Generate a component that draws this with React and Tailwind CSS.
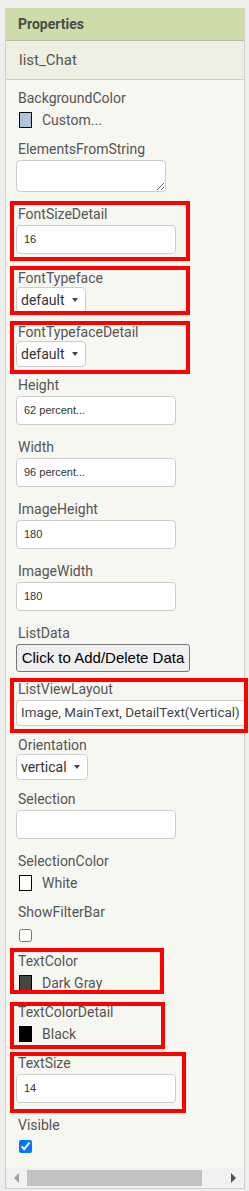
import React from 'react';

const roboto = "font-['Roboto',sans-serif]";

const Label = ({ children, tight }) => (
  <div className={`whitespace-nowrap pl-[2px] text-[14px] leading-[16px] text-[#555] ${tight ? 'h-[17px]' : 'h-[19px]'}`}>
    {children}
  </div>
);

const Highlight = ({ box, children }) => (
  <div className="relative">
    {children}
    <div className={`pointer-events-none absolute border-4 border-[#ff0000] ${box}`} />
  </div>
);

const TextProp = ({ label, value = '', gap = 'mb-[14px]' }) => (
  <div className={gap}>
    <Label>{label}</Label>
    <div className="flex h-[29px] w-[160px] items-center rounded-[4px] border border-[#ccc] bg-white pl-[7px] font-['Liberation_Sans',Arial,sans-serif] text-[11px] text-[#333]">
      {value}
    </div>
  </div>
);

const SelectProp = ({ label, value, gap = 'mb-[11px]' }) => (
  <div className={gap}>
    <Label tight>{label}</Label>
    <div className="flex h-[26px] w-fit items-center rounded-[4px] border border-[#ccc] bg-white pl-[4px] pr-[7px] text-[14px] text-[#333]">
      {value}
      <span className="ml-[7px] h-0 w-0 border-x-[3px] border-t-[4px] border-x-transparent border-t-[#444]" />
    </div>
  </div>
);

const ColorProp = ({ label, swatch, name }) => (
  <div className="mb-[13px]">
    <Label>{label}</Label>
    <div className="mt-[3px] flex h-[16px] items-center pl-[3px]">
      <div className={`h-[16px] w-[13px] border border-black ${swatch}`} />
      <span className="ml-[10px] text-[14px] leading-[16px] text-[#555]">{name}</span>
    </div>
  </div>
);

const CheckProp = ({ label, checked, top = 'mt-[6px]' }) => (
  <div className="mb-[11px]">
    <Label>{label}</Label>
    <div className={`flex h-[13px] pl-[3px] ${top}`}>
      <input type="checkbox" checked={checked} readOnly className="m-0 h-[13px] w-[13px]" />
    </div>
  </div>
);

export default function App() {
  return (
    <div className={`h-[1191px] w-[249px] overflow-hidden bg-[#eeeeec] pl-[5px] pt-[8px] ${roboto}`}>
      <div className="flex h-[1181px] w-[240px] flex-col border-x border-b border-[#cfcfcf] bg-[#f7f7f2]">
        <div className="h-[33px] border-b border-[#bdbdb5] bg-[#cddca9] pl-[12px] text-[14px] font-bold leading-[32px] text-[#4a4a4a]">
          Properties
        </div>
        <div className="h-[39px] border-b border-[#cfcfc8] bg-[#edf0e1] pl-[13px] text-[15px] leading-[38px] text-[#555]">
          list_Chat
        </div>

        <div className="flex-1 pl-[10px] pt-[10px]">
          <ColorProp label="BackgroundColor" swatch="bg-[#b0c4de]" name="Custom..." />

          <div className="mb-[14px]">
            <Label>ElementsFromString</Label>
            <textarea
              readOnly
              className="block h-[32px] w-[150px] rounded-[4px] border border-[#ccc] bg-white"
            />
          </div>

          <Highlight box="-top-[5px] -left-[6px] h-[60px] w-[180px]">
            <TextProp label="FontSizeDetail" value="16" gap="mb-[16px]" />
          </Highlight>
          <Highlight box="-top-[4px] -left-[6px] h-[49px] w-[180px]">
            <SelectProp label="FontTypeface" value="default" />
          </Highlight>
          <Highlight box="-top-[3px] -left-[6px] h-[53px] w-[180px]">
            <SelectProp label="FontTypefaceDetail" value="default" gap="mb-[10px]" />
          </Highlight>

          <TextProp label="Height" value="62 percent..." />
          <TextProp label="Width" value="96 percent..." />
          <TextProp label="ImageHeight" value="180" />
          <TextProp label="ImageWidth" value="180" />

          <div className="mb-[9px]">
            <Label>ListData</Label>
            <button className="h-[28px] w-[174px] rounded-[3px] border border-[#767676] bg-[#efefef] font-['Liberation_Sans',Arial,sans-serif] text-[15px] text-black">
              Click to Add/Delete Data
            </button>
          </div>

          <Highlight box="-top-[3px] -left-[6px] h-[55px] w-[238px]">
            <div className="mb-[11px]">
              <Label>ListViewLayout</Label>
              <div className="flex h-[26px] w-[228px] items-center overflow-hidden whitespace-nowrap rounded-l-[4px] border-y border-l border-[#ccc] bg-white pl-[4px] text-[13.4px] text-[#444]">
                Image, MainText, DetailText(Vertical)
              </div>
            </div>
          </Highlight>

          <SelectProp label="Orientation" value="vertical" />
          <TextProp label="Selection" />
          <ColorProp label="SelectionColor" swatch="bg-white" name="White" />
          <CheckProp label="ShowFilterBar" checked={false} />

          <Highlight box="-top-[5px] -left-[6px] h-[46px] w-[154px]">
            <ColorProp label="TextColor" swatch="bg-[#444444]" name="Dark Gray" />
          </Highlight>
          <Highlight box="-top-[2px] -left-[6px] h-[47px] w-[155px]">
            <ColorProp label="TextColorDetail" swatch="bg-black" name="Black" />
          </Highlight>
          <Highlight box="-top-[3px] -left-[6px] h-[61px] w-[176px]">
            <TextProp label="TextSize" value="14" />
          </Highlight>

          <CheckProp label="Visible" checked top="mt-[4px]" />
        </div>

        <div className="flex h-[20px] items-center bg-[#f1f1f1]">
          <span className="ml-[8px] h-0 w-0 border-y-[5px] border-r-[5px] border-y-transparent border-r-[#a3a3a3]" />
          <div className="ml-[8px] h-[16px] w-[175px] bg-[#c1c1c1]" />
          <span className="ml-auto mr-[8px] h-0 w-0 border-y-[5px] border-l-[5px] border-y-transparent border-l-[#505050]" />
        </div>
      </div>
    </div>
  );
}
